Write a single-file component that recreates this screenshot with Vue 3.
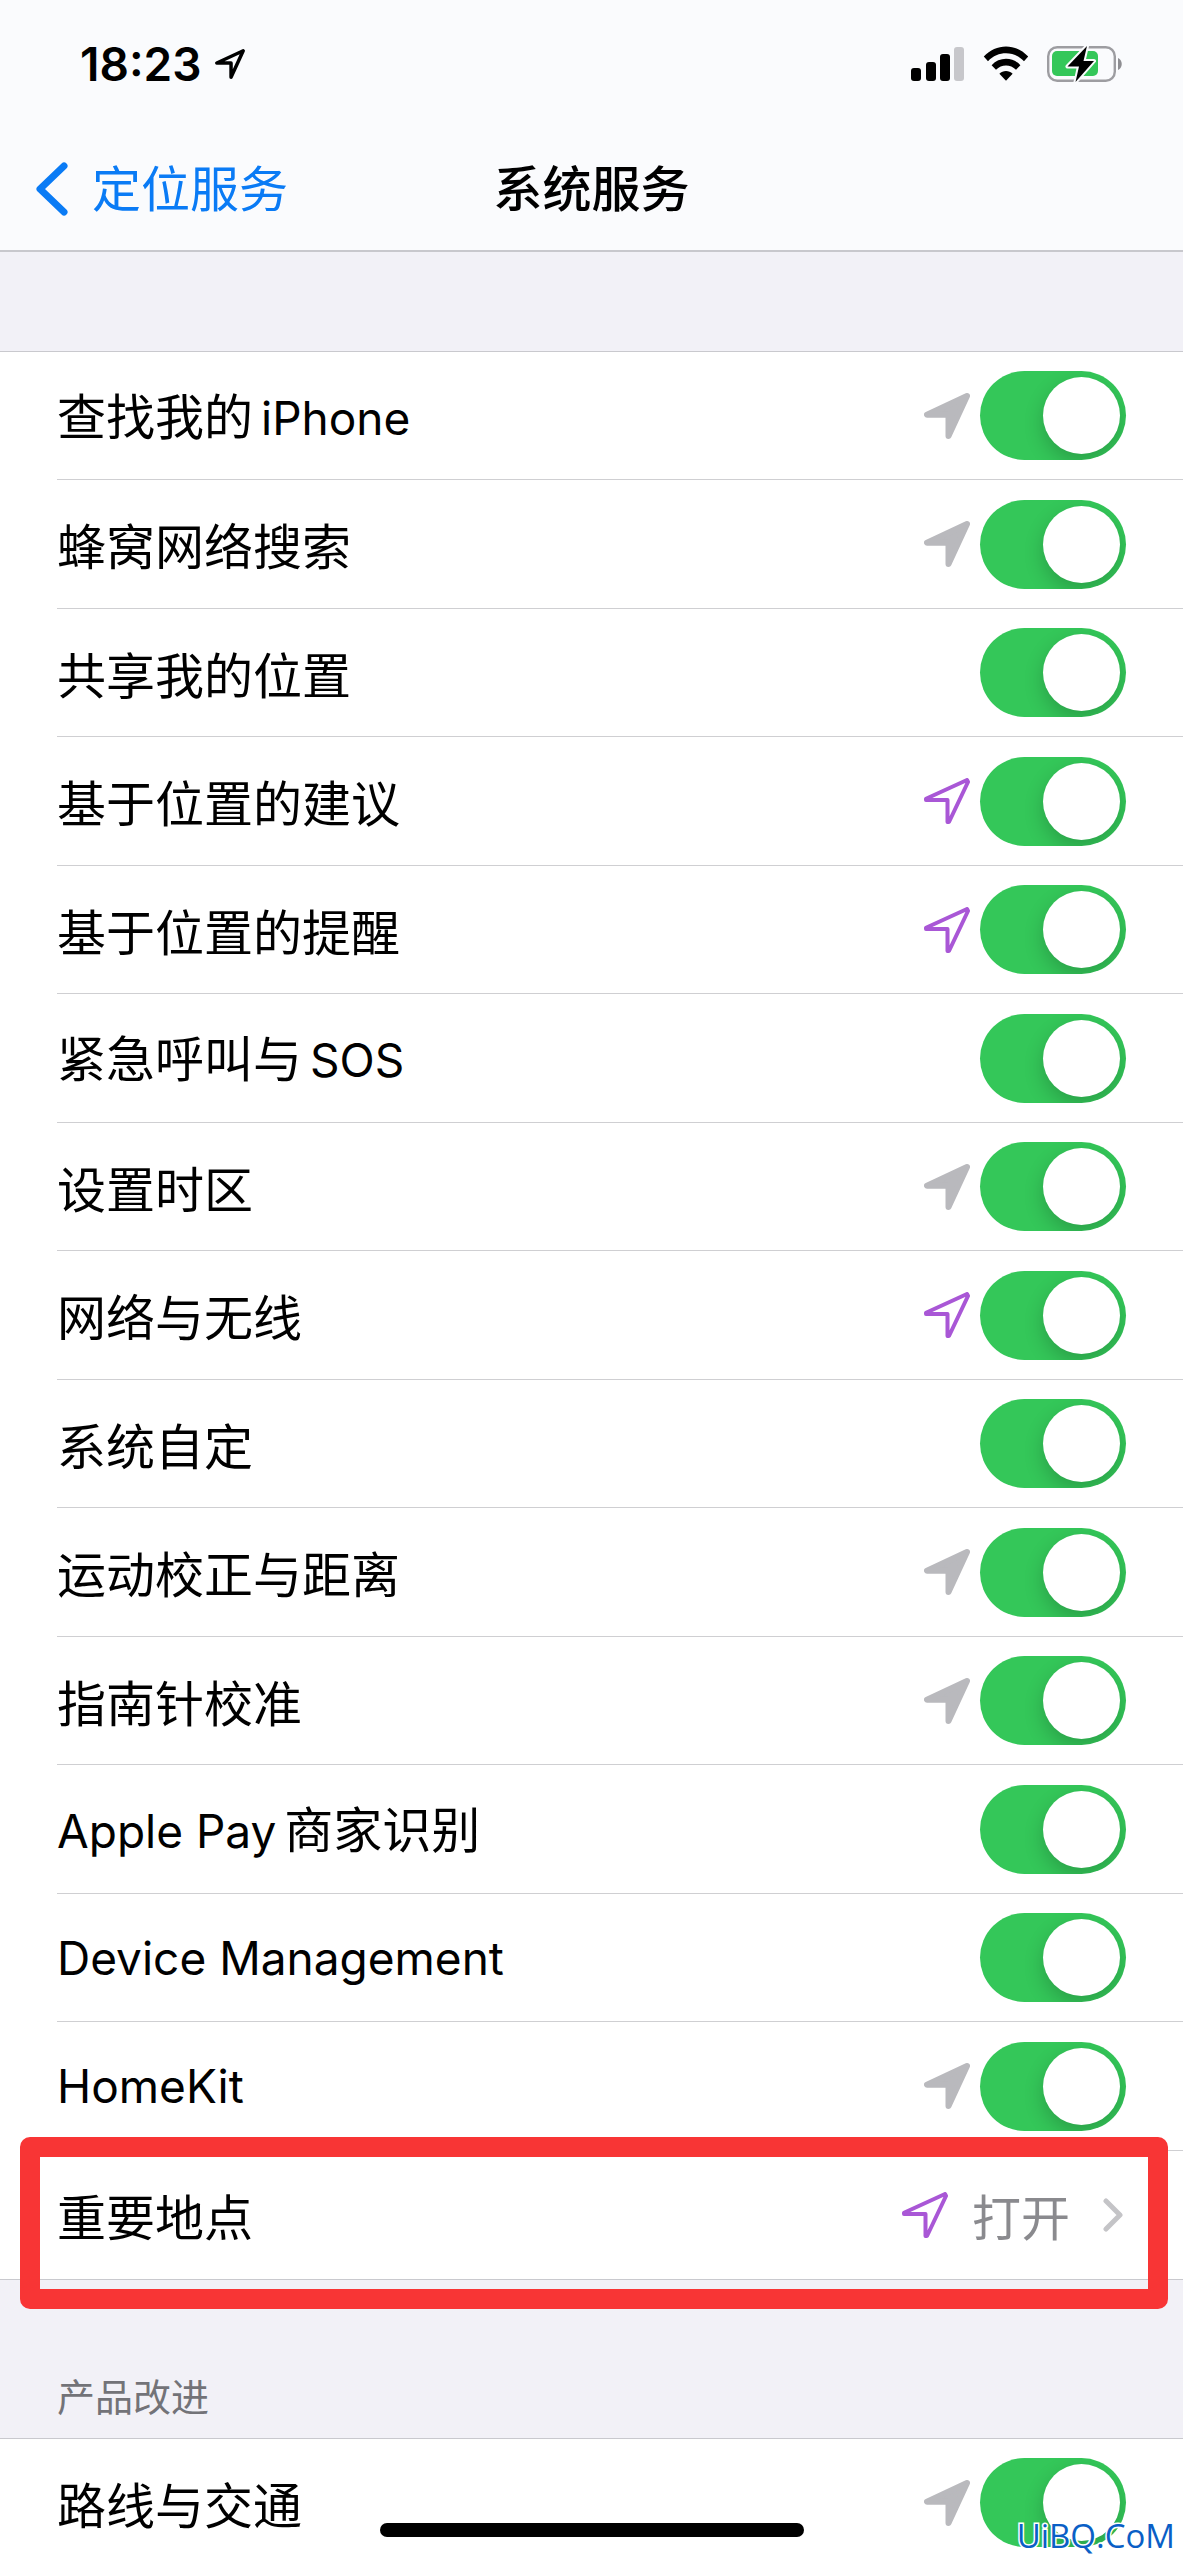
<script setup>
import { reactive } from 'vue'

const services = reactive([
  { id: 'find', parts: ['查找我的', ' iPhone'], arrow: 'gray', on: true },
  { id: 'cell', parts: ['蜂窝网络搜索'], arrow: 'gray', on: true },
  { id: 'share', parts: ['共享我的位置'], arrow: '', on: true },
  { id: 'suggest', parts: ['基于位置的建议'], arrow: 'purple', on: true },
  { id: 'remind', parts: ['基于位置的提醒'], arrow: 'purple', on: true },
  { id: 'sos', parts: ['紧急呼叫与', ' SOS'], arrow: '', on: true },
  { id: 'timezone', parts: ['设置时区'], arrow: 'gray', on: true },
  { id: 'wireless', parts: ['网络与无线'], arrow: 'purple', on: true },
  { id: 'custom', parts: ['系统自定'], arrow: '', on: true },
  { id: 'motion', parts: ['运动校正与距离'], arrow: 'gray', on: true },
  { id: 'compass', parts: ['指南针校准'], arrow: 'gray', on: true },
  { id: 'pay', parts: ['Apple Pay', '商家识别'], arrow: '', on: true },
  { id: 'device', parts: ['Device Management'], arrow: '', on: true },
  { id: 'homekit', parts: ['HomeKit'], arrow: 'gray', on: true },
])

const improve = reactive([
  { id: 'routes', parts: ['路线与交通'], arrow: 'gray', on: true },
])

const isLatin = (text) => /[A-Za-z]/.test(text)
</script>

<template>
  <div class="page">
    <header class="top">
      <div class="status">
        <div class="clock">
          <span>18:23</span>
          <svg class="clock-arrow" viewBox="0 0 46 46" aria-hidden="true">
            <path d="M42 4 4 21.5H24.5V42Z" />
          </svg>
        </div>
        <div class="indicators">
          <svg width="54" height="34" viewBox="0 0 54 34" aria-hidden="true">
            <rect x="0" y="21" width="10" height="13" rx="3" />
            <rect x="15" y="15" width="10" height="19" rx="3" />
            <rect x="29" y="7" width="10" height="27" rx="3" />
            <rect x="43" y="0" width="10" height="34" rx="3" fill="#c7c7cb" />
          </svg>
          <svg width="46" height="36" viewBox="0 0 46 36" aria-hidden="true">
            <path d="M.8 10.6C13-3 33-3 45.2 10.6L41 15.2C31 4.6 15 4.6 5 15.2Z" />
            <path d="M8.6 19.2C16.5 10.7 29.5 10.7 37.4 19.2L33 23.8C27.5 18 18.5 18 13 23.8Z" />
            <path d="M16.4 27.8C20 24 26 24 29.6 27.8L23 34.8Z" />
          </svg>
          <svg width="76" height="38" viewBox="0 0 76 38" aria-hidden="true">
            <rect x="1.2" y="2.2" width="66.6" height="33.6" rx="9" fill="none" stroke="#9d9da1" stroke-width="2.4" />
            <path d="M71 13C76 15 76 23 71 25Z" fill="#8e8e92" />
            <rect x="5" y="6" width="46" height="25" rx="5" fill="#34c759" />
            <path class="bolt" d="M40 1 20.5 21.5H32L28.5 37 47 16H36.5Z" />
          </svg>
        </div>
      </div>
      <nav class="nav">
        <a class="back" href="#">
          <svg width="32" height="54" viewBox="0 0 32 54" aria-hidden="true">
            <path d="M28 4 4 27 28 50" />
          </svg>
          <span>定位服务</span>
        </a>
        <h1>系统服务</h1>
        <span></span>
      </nav>
    </header>

    <main>
      <ul class="list">
        <li v-for="item in services" :key="item.id" class="row">
          <label :for="item.id"><span v-for="part in item.parts" :key="part" :class="{ latin: isLatin(part) }">{{ part }}</span></label>
          <svg v-if="item.arrow" class="arrow" :class="item.arrow" viewBox="0 0 46 46" aria-hidden="true">
            <path v-if="item.arrow === 'gray'" d="M43 3 3 21.7H24.5V43Z" />
            <path v-else d="M43 2 2 20.8V22H23.5V44H25L44 4Z" />
          </svg>
          <input :id="item.id" v-model="item.on" class="switch" type="checkbox" role="switch" />
        </li>
        <li class="row marked">
          <a class="link" href="#">
            <span class="name">重要地点</span>
            <svg class="arrow purple" viewBox="0 0 46 46" aria-hidden="true">
              <path d="M43 2 2 20.8V22H23.5V44H25L44 4Z" />
            </svg>
            <span class="value">打开</span>
            <svg class="chevron" width="22" height="34" viewBox="0 0 22 34" aria-hidden="true">
              <path d="M4 3 18 17 4 31" />
            </svg>
          </a>
        </li>
      </ul>

      <h2>产品改进</h2>

      <ul class="list last">
        <li v-for="item in improve" :key="item.id" class="row">
          <label :for="item.id"><span v-for="part in item.parts" :key="part">{{ part }}</span></label>
          <svg class="arrow gray" viewBox="0 0 46 46" aria-hidden="true">
            <path d="M43 3 3 21.7H24.5V43Z" />
          </svg>
          <input :id="item.id" v-model="item.on" class="switch" type="checkbox" role="switch" />
        </li>
      </ul>
    </main>

    <div class="home-bar"></div>
    <div class="watermark">UiBQ.CoM</div>
  </div>
</template>

<style>
body {
  margin: 0;
  background: #fff;
}
</style>

<style scoped>
.page {
  position: relative;
  min-height: 100vh;
  overflow: hidden;
  background: #fff;
  color: #000;
  font-family: "Noto Sans CJK SC", "Inter", sans-serif;
  font-size: 49px;
  line-height: 72px;
}

.top {
  background: #fafbfd;
  border-bottom: 2px solid #c8c8cd;
}

.status {
  display: flex;
  justify-content: space-between;
  align-items: center;
  height: 128px;
  padding: 0 60px 0 80px;
}

.clock {
  display: flex;
  align-items: center;
  gap: 12px;
  font-family: "Inter", sans-serif;
  font-size: 46px;
  font-weight: 600;
}

.clock-arrow {
  width: 32px;
  height: 32px;
  fill: none;
  stroke: #000;
  stroke-width: 5;
  stroke-linejoin: round;
}

.indicators {
  display: flex;
  align-items: center;
  gap: 18px;
}

.bolt {
  stroke: #fafbfd;
  stroke-width: 4;
  stroke-linejoin: round;
  paint-order: stroke;
}

.nav {
  display: grid;
  grid-template-columns: 1fr auto 1fr;
  align-items: center;
  height: 122px;
  padding: 0 36px;
  line-height: 66px;
}

.nav h1,
.back span {
  padding-bottom: 6px;
}

.back {
  display: flex;
  align-items: center;
  gap: 24px;
  color: #0a7bf5;
  text-decoration: none;
}

.back path,
.chevron path {
  fill: none;
  stroke: #0a7bf5;
  stroke-width: 7;
  stroke-linecap: round;
  stroke-linejoin: round;
}

h1 {
  margin: 0;
  font-size: 49px;
  font-weight: 500;
}

main {
  padding-top: 99px;
  background: #f2f1f7;
}

.list {
  margin: 0;
  padding: 0;
  list-style: none;
  background: #fff;
  border-top: 1px solid #c9c9ce;
  border-bottom: 1px solid #c9c9ce;
}

.row {
  position: relative;
  display: flex;
  align-items: center;
  box-sizing: border-box;
  height: 128px;
  margin-left: 57px;
  padding-right: 57px;
  border-bottom: 1px solid #cfcfd2;
}

.row:nth-child(even) {
  height: 129px;
}

.row:last-child {
  border-bottom: 0;
}

.row label {
  display: flex;
  flex: 1;
  align-items: baseline;
  gap: 8px;
}

.name {
  flex: 1;
}

.latin {
  font-family: "Inter", sans-serif;
  font-size: 46px;
}

.arrow {
  width: 46px;
  height: 46px;
  margin-right: 10px;
  stroke-linejoin: round;
}

.gray {
  fill: #b9b9bd;
  stroke: #b9b9bd;
  stroke-width: 6;
}

.purple {
  fill: none;
  stroke: #a957d6;
  stroke-width: 4;
}

.switch {
  appearance: none;
  width: 146px;
  height: 89px;
  margin: 0;
  overflow: hidden;
  border-radius: 45px;
  background: #e9e9eb;
}

.switch::before {
  content: "";
  display: block;
  width: 77px;
  height: 77px;
  margin: 6px;
  border-radius: 50%;
  background: #fff;
  box-shadow: 0 8px 20px rgba(0, 0, 0, 0.2);
}

.switch:checked {
  background: #34c759;
}

.switch:checked::before {
  margin-left: 63px;
}

.link {
  display: flex;
  flex: 1;
  align-items: center;
  color: inherit;
  text-decoration: none;
}

.link .arrow {
  margin-right: 24px;
}

.value {
  color: #8a8a8e;
}

.chevron {
  margin: 0 2px 0 32px;
}

.chevron path {
  stroke: #c4c4c7;
  stroke-width: 5;
}

/* Highlight frame drawn over the row and its neighbours */
.marked::after {
  content: "";
  position: absolute;
  inset: -14px 15px -30px -37px;
  border: 20px solid #f83535;
  border-radius: 10px;
  pointer-events: none;
}

h2 {
  margin: 0;
  padding: 88px 57px 16px;
  color: #737378;
  font-size: 38px;
  font-weight: 400;
  line-height: 54px;
}

.last {
  border-bottom: 0;
}

.last .row {
  height: 121px;
  padding-top: 6px;
}

.home-bar {
  position: absolute;
  bottom: 23px;
  left: 50%;
  width: 424px;
  height: 14px;
  border-radius: 7px;
  background: #000;
  transform: translateX(-50%);
}

.watermark {
  position: absolute;
  right: 8px;
  bottom: 4px;
  color: #0a5fc6;
  font-family: "Open Sans", sans-serif;
  font-size: 33px;
  font-weight: 500;
  line-height: 40px;
  -webkit-text-stroke: 3px #fff;
  paint-order: stroke fill;
}
</style>
